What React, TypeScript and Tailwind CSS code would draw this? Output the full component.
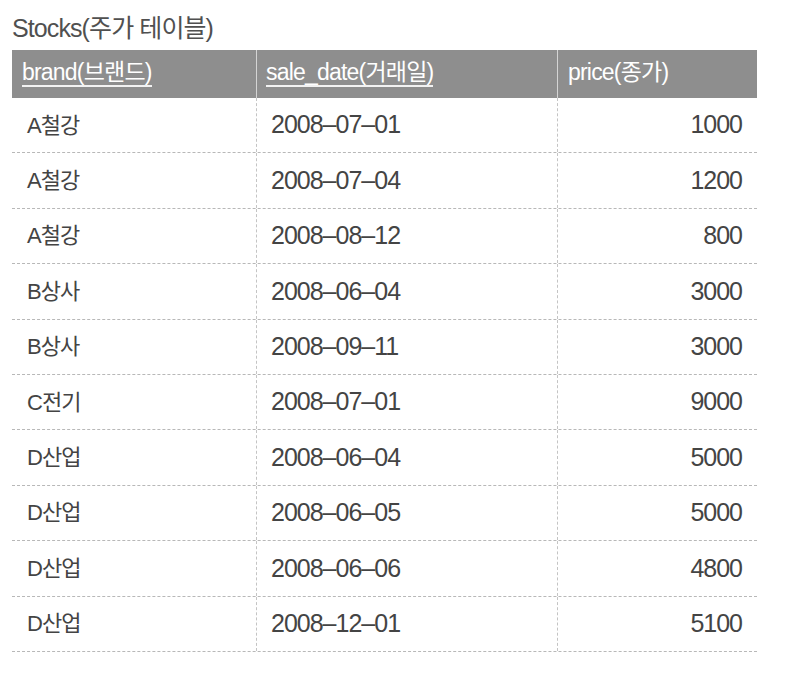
const rows: [string, string, string][] = [
  ["A철강", "2008–07–01", "1000"],
  ["A철강", "2008–07–04", "1200"],
  ["A철강", "2008–08–12", "800"],
  ["B상사", "2008–06–04", "3000"],
  ["B상사", "2008–09–11", "3000"],
  ["C전기", "2008–07–01", "9000"],
  ["D산업", "2008–06–04", "5000"],
  ["D산업", "2008–06–05", "5000"],
  ["D산업", "2008–06–06", "4800"],
  ["D산업", "2008–12–01", "5100"],
];

export default function App() {
  return (
    <div
      className="w-[788px] h-[674px] bg-white pl-[12px] pt-[13px]"
      style={{ fontFamily: '"Liberation Sans", "Noto Sans CJK KR", sans-serif' }}
    >
      <h1 className="text-[25px] leading-[30px] text-[#505050] tracking-[-0.9px]">Stocks(주가 테이블)</h1>
      <div className="w-[745px] mt-[7px]">
        <div className="flex h-[48px] bg-[#8e8e8e] text-white text-[23px] leading-[28px] tracking-[-0.8px]">
          <div className="w-[245px] pl-[10px] pt-[8px] border-r border-[#d4d4d4]">
            <span className="border-b-2 border-[#f2f2f2]">brand(브랜드)</span>
          </div>
          <div className="w-[301px] pl-[9px] pt-[8px] border-r border-[#d4d4d4]">
            <span className="border-b-2 border-[#f2f2f2]">sale_date(거래일)</span>
          </div>
          <div className="flex-1 pl-[10px] pt-[8px]">price(종가)</div>
        </div>
        {rows.map(([b, d, p], i) => (
          <div
            key={i}
            className="flex h-[55.4px] border-b border-dashed border-[#b8b8b8] text-[#444444]"
          >
            <div className="w-[245px] pl-[15px] flex items-center border-r border-dashed border-[#c4c4c4] text-[22px] tracking-[-1px]">
              {b}
            </div>
            <div className="w-[301px] pl-[14px] flex items-center border-r border-dashed border-[#c4c4c4] text-[25px] tracking-[-1px]">
              {d}
            </div>
            <div className="flex-1 pr-[15px] flex items-center justify-end text-[25px] tracking-[-1px]">{p}</div>
          </div>
        ))}
      </div>
    </div>
  );
}
